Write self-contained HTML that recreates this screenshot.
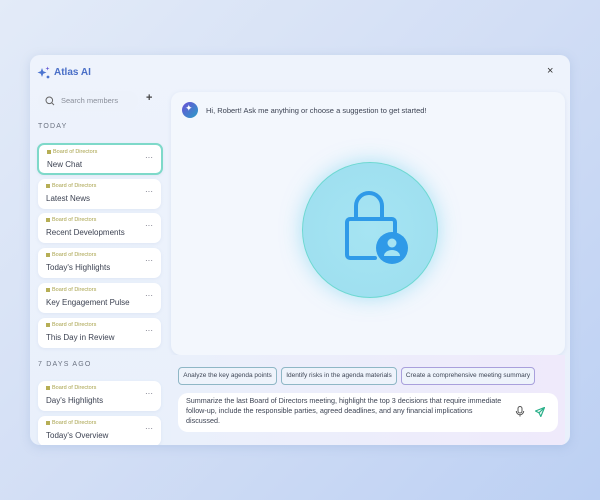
<!DOCTYPE html>
<html><head><style>
*{box-sizing:border-box;margin:0;padding:0}
body{width:600px;height:500px;overflow:hidden;font-family:"Liberation Sans",sans-serif;background:linear-gradient(135deg,#e3ebf8 0%,#d2def5 50%,#bcd0f3 100%);position:relative}
.panel{position:absolute;left:30px;top:55px;width:540px;height:390px;border-radius:10px;background:linear-gradient(180deg,#eef3fc,#e9f0fb);box-shadow:0 2px 10px rgba(120,150,200,.25);overflow:hidden}
.abs{position:absolute}
.card{position:absolute;left:8px;width:123px;height:30px;background:#fff;border-radius:7px;box-shadow:0 1px 3px rgba(150,170,210,.15)}
.card .t{position:absolute;left:8px;top:4px;font-size:5.5px;color:#a8a24a}
.card .t:before{content:"";display:inline-block;width:4px;height:4px;background:#b6ae55;margin-right:2px;vertical-align:middle}
.card .n{position:absolute;left:8px;top:15px;font-size:8px;color:#3c4252}
.card .d{position:absolute;right:8px;top:8px;font-size:8px;color:#667}
.sec{position:absolute;left:8px;font-size:7px;color:#6a7180;letter-spacing:1.2px}
.chip{position:absolute;top:312px;height:18px;border:1px solid #8fb7c6;border-radius:4px;background:#eef3fb;font-size:6.5px;color:#3e4656;line-height:16px;text-align:center}
</style></head><body>
<div class="panel">
 <svg class="abs" style="left:7px;top:11px" width="14" height="14" viewBox="0 0 14 14"><path d="M5 2 L6.2 5.3 L9.5 6.5 L6.2 7.7 L5 11 L3.8 7.7 L0.5 6.5 L3.8 5.3Z" fill="#4b74d0"/><path d="M10.5 0.5 L11 2 L12.5 2.5 L11 3 L10.5 4.5 L10 3 L8.5 2.5 L10 2Z" fill="#6a5ed6"/><circle cx="11" cy="11" r="1.4" fill="#4b74d0"/></svg>
 <div class="abs" style="left:24px;top:12px;font-size:10px;color:#4a6fc7;font-weight:bold">Atlas AI</div>
 <div class="abs" style="left:517px;top:10px;font-size:11px;color:#333">×</div>
 <div class="abs" style="left:8px;top:36px;width:100px;height:20px;border-radius:10px;background:#edf2fb"></div>
 <svg class="abs" style="left:15px;top:41px" width="10" height="10" viewBox="0 0 10 10"><circle cx="4.3" cy="4.3" r="3.3" fill="none" stroke="#666" stroke-width="1"/><path d="M6.8 6.8 L9 9" stroke="#666" stroke-width="1"/></svg>
 <div class="abs" style="left:31px;top:41px;font-size:7.5px;color:#8a8f9a">Search members</div>
 <div class="abs" style="left:116px;top:37px;font-size:11px;color:#444;font-weight:bold">+</div>
 <div class="sec" style="top:68px">TODAY</div>
 <div class="card" style="top:88px;left:7px;width:126px;height:32px;border:2px solid #7ed9c9"><div class="t">Board of Directors</div><div class="n">New Chat</div><div class="d">···</div></div>
 <div class="card" style="top:124px"><div class="t">Board of Directors</div><div class="n">Latest News</div><div class="d">···</div></div>
 <div class="card" style="top:158px"><div class="t">Board of Directors</div><div class="n">Recent Developments</div><div class="d">···</div></div>
 <div class="card" style="top:193px"><div class="t">Board of Directors</div><div class="n">Today's Highlights</div><div class="d">···</div></div>
 <div class="card" style="top:228px"><div class="t">Board of Directors</div><div class="n">Key Engagement Pulse</div><div class="d">···</div></div>
 <div class="card" style="top:263px"><div class="t">Board of Directors</div><div class="n">This Day in Review</div><div class="d">···</div></div>
 <div class="sec" style="top:306px">7 DAYS AGO</div>
 <div class="card" style="top:326px"><div class="t">Board of Directors</div><div class="n">Day's Highlights</div><div class="d">···</div></div>
 <div class="card" style="top:361px"><div class="t">Board of Directors</div><div class="n">Today's Overview</div><div class="d">···</div></div>

 <div class="abs" style="left:141px;top:37px;width:394px;height:263px;border-radius:10px;background:#f3f7fd;box-shadow:0 1px 4px rgba(150,170,210,.2)"></div>
 <div class="abs" style="left:152px;top:47px;width:16px;height:16px;border-radius:50%;background:linear-gradient(135deg,#6a4fd6,#2a9dc7)"></div>
 <div class="abs" style="left:155px;top:48px;color:#fff;font-size:9px">✦</div>
 <div class="abs" style="left:176px;top:51px;font-size:7.5px;color:#3d4454">Hi, Robert! Ask me anything or choose a suggestion to get started!</div>
 <div class="abs" style="left:272px;top:107px;width:136px;height:136px;border-radius:50%;background:radial-gradient(circle,#a6e4f3 0%,#9fe0f0 70%,#9ad9ee 100%);border:1px solid #6ed8d2;box-shadow:0 0 20px rgba(120,210,240,.6)"></div>
 <svg class="abs" style="left:272px;top:107px" width="136" height="136" viewBox="0 0 136 136">
  <path d="M54 55 V44 a13 13 0 0 1 26 0 V55" fill="none" stroke="#2f9ae8" stroke-width="4"/>
  <path d="M73 96 H48 a3 3 0 0 1 -3 -3 V60 a3 3 0 0 1 3 -3 H90 a3 3 0 0 1 3 3 V70" fill="none" stroke="#2f9ae8" stroke-width="4" stroke-linecap="round"/>
  <circle cx="90" cy="86" r="16" fill="#2f9ae8"/>
  <circle cx="90" cy="81" r="4.5" fill="#a6e4f3"/>
  <path d="M82 94 a8 6 0 0 1 16 0 Z" fill="#a6e4f3"/>
 </svg>

 <div class="abs" style="left:141px;top:300px;width:394px;height:90px;background:linear-gradient(90deg,#eaf0fb,#efeafb)"></div>
 <div class="chip" style="left:148px;width:99px">Analyze the key agenda points</div>
 <div class="chip" style="left:251px;width:116px">Identify risks in the agenda materials</div>
 <div class="chip" style="left:371px;width:134px;border-color:#a9a0dc">Create a comprehensive meeting summary</div>
 <div class="abs" style="left:148px;top:338px;width:380px;height:39px;border-radius:10px;background:#fff"></div>
 <div class="abs" style="left:156px;top:341px;width:320px;font-size:7.2px;line-height:10px;color:#3d4454">Summarize the last Board of Directors meeting, highlight the top 3 decisions that require immediate follow-up, include the responsible parties, agreed deadlines, and any financial implications discussed.</div>
 <svg class="abs" style="left:485px;top:351px" width="10" height="11" viewBox="0 0 10 11"><rect x="3" y="0.5" width="4" height="6.5" rx="2" fill="none" stroke="#555" stroke-width="1"/><path d="M1.3 5 a3.7 3.7 0 0 0 7.4 0 M5 8.7 V10.5" fill="none" stroke="#555" stroke-width="1"/></svg>
 <svg class="abs" style="left:505px;top:352px" width="10" height="10" viewBox="0 0 10 10"><path d="M9.5 0.5 L0.5 4 L4 5.8 L5.8 9.5Z M9.5 0.5 L4 5.8" fill="none" stroke="#2bb08a" stroke-width="1.2" stroke-linejoin="round"/></svg>
</div>
</body></html>
